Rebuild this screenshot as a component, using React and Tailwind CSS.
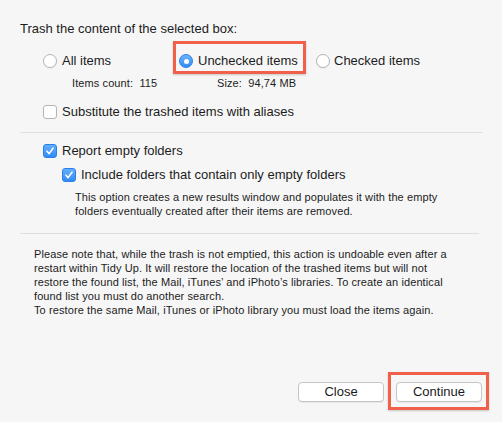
import React from "react";

const Radio = ({ checked }) => (
  <span
    className={
      checked
        ? "flex h-[14px] w-[14px] shrink-0 items-center justify-center rounded-full bg-gradient-to-b from-[#6cb3fa] to-[#2f8cf5] border border-[#2a7fe6]"
        : "h-[14px] w-[14px] shrink-0 rounded-full bg-white border border-[#b4b4b4] shadow-[0_1px_0_rgba(0,0,0,0.04)]"
    }
  >
    {checked && <span className="h-[5px] w-[5px] rounded-full bg-white" />}
  </span>
);

const Checkbox = ({ checked }) => (
  <span
    className={
      checked
        ? "flex h-[14px] w-[14px] shrink-0 items-center justify-center rounded-[3px] bg-gradient-to-b from-[#64aefb] to-[#2f8cf5] border border-[#2a80e8]"
        : "h-[14px] w-[14px] shrink-0 rounded-[3px] bg-white border border-[#b4b4b4]"
    }
  >
    {checked && (
      <svg width="10" height="10" viewBox="0 0 10 10">
        <path d="M2 5.2 L4.1 7.6 L8 2.2" fill="none" stroke="white" strokeWidth="1.6" strokeLinecap="round" strokeLinejoin="round" />
      </svg>
    )}
  </span>
);

const Button = ({ children }) => (
  <button className="flex h-[20px] w-[86px] items-center justify-center rounded-[4px] border border-[#c5c5c5] bg-white text-[13px] text-[#1a1a1a] shadow-[0_1px_0_rgba(0,0,0,0.06)]">
    {children}
  </button>
);

export default function App() {
  return (
    <div
      className="flex h-[422px] w-[502px] flex-col bg-[#f6f6f6] pt-[21px] text-[#1c1c1c]"
      style={{ fontFamily: '"Liberation Sans", Arial, sans-serif' }}
    >
      <div className="h-[16px] px-[20px] text-[13px] leading-[16px]">Trash the content of the selected box:</div>

      {/* Choice of items */}
      <div className="mt-[16px] flex h-[16px] items-center pl-[43px] text-[13px]">
        <label className="flex w-[136px] items-center gap-[5px]">
          <Radio />
          <span>All items</span>
        </label>
        <label className="relative flex w-[137px] items-center gap-[5px]">
          <Radio checked />
          <span>Unchecked items</span>
          <span className="absolute left-[-6px] right-[10px] top-[-10px] bottom-[-3px] border-[3px] border-[#f0604b] shadow-[0_1px_2px_rgba(0,0,0,0.2)]" />
        </label>
        <label className="flex items-center gap-[4px]">
          <Radio />
          <span>Checked items</span>
        </label>
      </div>

      <div className="mt-[7px] flex h-[14px] items-center text-[11px] leading-[14px] tracking-[0.1px]">
        <span className="ml-[72px] w-[145px]">Items count:&nbsp;&nbsp;115</span>
        <span>Size:&nbsp;&nbsp;94,74 MB</span>
      </div>

      <label className="mt-[14px] flex h-[16px] items-center gap-[5px] pl-[43px] text-[13px]">
        <Checkbox />
        <span>Substitute the trashed items with aliases</span>
      </label>

      <div className="mx-[20px] mt-[12px] h-px w-[462px] bg-[#dedede]" />

      {/* Empty folders */}
      <label className="mt-[10px] flex h-[16px] items-center gap-[5px] pl-[43px] text-[13px]">
        <Checkbox checked />
        <span>Report empty folders</span>
      </label>
      <label className="mt-[8px] flex h-[16px] items-center gap-[5px] pl-[62px] text-[13px]">
        <Checkbox checked />
        <span>Include folders that contain only empty folders</span>
      </label>
      <p className="mt-[7px] pl-[75px] text-[11px] leading-[14px] tracking-[0.1px]">
        This option creates a new results window and populates it with the empty
        <br />
        folders eventually created after their items are removed.
      </p>

      <div className="mx-[20px] mt-[15px] h-px w-[459px] bg-[#dedede]" />

      <p className="mt-[13px] pl-[34px] text-[11px] leading-[14px] tracking-[0.1px]">
        Please note that, while the trash is not emptied, this action is undoable even after a
        <br />
        restart within Tidy Up. It will restore the location of the trashed items but will not
        <br />
        restore the found list, the Mail, iTunes’ and iPhoto’s libraries. To create an identical
        <br />
        found list you must do another search.
        <br />
        To restore the same Mail, iTunes or iPhoto library you must load the items again.
      </p>

      <div className="mt-[65px] flex justify-end gap-[12px] pr-[20px]">
        <Button>Close</Button>
        <div className="relative">
          <Button>Continue</Button>
          <span className="absolute left-[-8px] right-[-7px] top-[-10px] bottom-[-8px] border-[3px] border-[#f0604b] shadow-[0_1px_2px_rgba(0,0,0,0.2)]" />
        </div>
      </div>
    </div>
  );
}
